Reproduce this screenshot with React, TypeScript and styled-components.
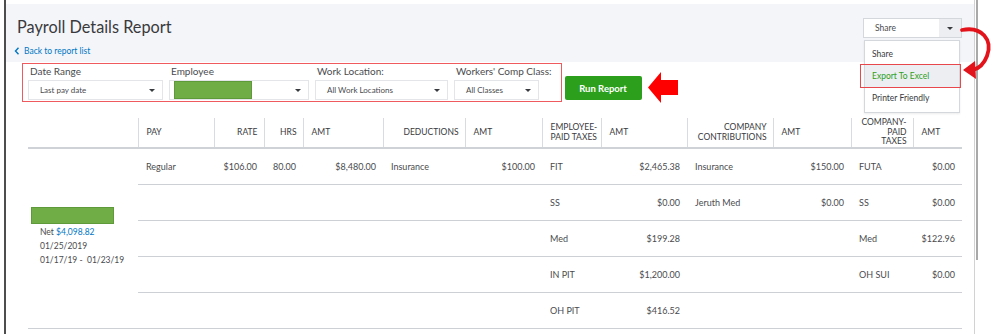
import React from 'react'
import styled, { createGlobalStyle } from 'styled-components'

const GlobalStyle = createGlobalStyle`
  html, body {
    margin: 0;
    padding: 0;
    background: #fff;
  }
  body {
    font-family: Lato, "Open Sans", "Liberation Sans", sans-serif;
    color: #4a4b4e;
  }
`

const Frame = styled.div`
  display: flex;
  height: 334px;
  padding-left: 4px;
  overflow: hidden;
`

const LeftRule = styled.div`
  width: 2px;
  background: #4d4d4d;
`

const Main = styled.div`
  width: 968px;
  display: flex;
  flex-direction: column;
`

const RightRail = styled.div`
  width: 3px;
  border-left: 1px solid #d2d2d2;
  display: flex;
  justify-content: flex-end;
`

const RailThumb = styled.div`
  width: 2px;
  height: 260px;
  background: #a9a9a9;
`

const Header = styled.div`
  margin-top: 4px;
  height: 58px;
  box-sizing: border-box;
  background: #f4f5f8;
  padding: 13px 12px 0 11px;
  display: flex;
  justify-content: space-between;
  align-items: flex-start;
  position: relative;
`

const TitleBlock = styled.div`
  display: flex;
  flex-direction: column;
`

const Title = styled.h1`
  margin: 0;
  font-size: 16.3px;
  line-height: 20px;
  font-weight: 400;
  color: #393a3d;
`

const BackLink = styled.a`
  margin-top: 8px;
  margin-left: -3px;
  display: flex;
  align-items: center;
  gap: 4px;
  font-size: 8.5px;
  line-height: 12px;
  color: #0077c5;
  text-decoration: none;
`

const ShareWrap = styled.div`
  position: relative;
  margin-top: 1px;
`

const ShareButton = styled.div`
  width: 99px;
  height: 20px;
  box-sizing: border-box;
  border: 1px solid #d4d7dc;
  background: #fff;
  display: flex;
  font-size: 8.5px;
`

const ShareLabel = styled.span`
  flex: 1;
  display: flex;
  align-items: center;
  padding-left: 11px;
`

const ShareCaret = styled.span`
  width: 22px;
  background: #eceef1;
  display: flex;
  align-items: center;
  justify-content: center;
`

const Caret = styled.span`
  width: 0;
  height: 0;
  border-left: 3px solid transparent;
  border-right: 3px solid transparent;
  border-top: 3.5px solid #393a3d;
`

const Menu = styled.ul`
  position: absolute;
  top: 22px;
  left: 1px;
  width: 96px;
  margin: 0;
  padding: 2px 0 3px;
  list-style: none;
  background: #fff;
  border: 1px solid #d4d7dc;
  box-shadow: 0 1px 2px rgba(0, 0, 0, 0.08);
  box-sizing: border-box;
  z-index: 2;
`

const MenuItem = styled.li<{ active?: boolean }>`
  position: relative;
  height: 22px;
  display: flex;
  align-items: center;
  padding-left: 7px;
  font-size: 8.5px;
  color: ${({ active }) => (active ? '#2ca01c' : '#393a3d')};
  background: ${({ active }) => (active ? '#eceef1' : 'transparent')};
`

const Callout = styled.span`
  position: absolute;
  top: -1px;
  bottom: -1px;
  left: -5px;
  right: -2px;
  border: 1px solid #e8474b;
`

const CurvedArrow = styled.svg`
  position: absolute;
  top: 6px;
  right: -34px;
  overflow: visible;
  z-index: 3;
`

const FilterRow = styled.div`
  display: flex;
  align-items: flex-start;
  padding: 1px 0 0 16px;
`

const FilterBox = styled.div`
  display: flex;
  gap: 6px;
  padding: 0 9px 1px 5px;
  border: 1px solid #ee5a5e;
`

const Field = styled.div`
  display: flex;
  flex-direction: column;
`

const FieldLabel = styled.label`
  padding-left: 2px;
  font-size: 10px;
  line-height: 14px;
  margin-bottom: 2px;
  white-space: nowrap;
`

const Select = styled.div<{ w: number }>`
  width: ${({ w }) => w}px;
  height: 20px;
  box-sizing: border-box;
  border: 1px solid #e3e5e8;
  background: #fff;
  display: flex;
  align-items: center;
  justify-content: space-between;
  padding: 0 7px 0 11px;
  font-size: 8px;
`

const Redacted = styled.span<{ w: number; h: number }>`
  display: block;
  width: ${({ w }) => w}px;
  height: ${({ h }) => h}px;
  background: #70ad47;
  border: 1px solid #5e9a3a;
  box-sizing: border-box;
`

const RunButton = styled.button`
  margin: 13px 0 0 3px;
  width: 77px;
  height: 24px;
  border: none;
  border-radius: 2px;
  background: #2ca01c;
  color: #fff;
  font-family: inherit;
  font-size: 9.5px;
  font-weight: 700;
`

const PointerArrow = styled.svg`
  margin: 9px 0 0 6px;
`

const Table = styled.table`
  margin: 15px 0 0 22px;
  width: 934px;
  border-collapse: collapse;
  table-layout: fixed;
`

const Th = styled.th<{ align: 'left' | 'right'; ruled: boolean }>`
  height: 30px;
  padding: 0 6px 0 8px;
  box-sizing: border-box;
  font-size: 8.5px;
  line-height: 9.5px;
  font-weight: 400;
  white-space: nowrap;
  text-align: ${({ align }) => align};
  vertical-align: middle;
  border-left: ${({ ruled }) => (ruled ? '1px solid #d8dbdf' : 'none')};
  border-bottom: 2px solid #cfd3d8;
  color: #393a3d;
`

const Td = styled.td<{ align: 'left' | 'right' }>`
  height: 35px;
  padding: 0 7px 0 8px;
  font-size: 9px;
  text-align: ${({ align }) => align};
  vertical-align: middle;
  border-bottom: 1px solid #cdd0d5;
  white-space: nowrap;
`

const EmployeeCell = styled.td`
  padding: 0 0 0 3px;
  vertical-align: middle;
  border-bottom: 1px solid #cdd0d5;
  font-size: 8.5px;
  line-height: 14px;
`

const EmployeeLines = styled.div`
  padding: 1px 0 3px 9px;
  white-space: nowrap;
`

const NetAmount = styled.span`
  color: #0077c5;
`

type Align = 'left' | 'right'

const columns: { key: string; head: React.ReactNode; width: number; headAlign: Align; align: Align }[] = [
  { key: 'pay', head: 'PAY', width: 76, headAlign: 'left', align: 'left' },
  { key: 'rate', head: 'RATE', width: 50, headAlign: 'right', align: 'right' },
  { key: 'hrs', head: 'HRS', width: 39, headAlign: 'right', align: 'right' },
  { key: 'amt', head: 'AMT', width: 80, headAlign: 'left', align: 'right' },
  { key: 'ded', head: 'DEDUCTIONS', width: 82, headAlign: 'right', align: 'left' },
  { key: 'dedAmt', head: 'AMT', width: 77, headAlign: 'left', align: 'right' },
  { key: 'eTax', head: <>EMPLOYEE-<br />PAID TAXES</>, width: 59, headAlign: 'left', align: 'left' },
  { key: 'eAmt', head: 'AMT', width: 86, headAlign: 'left', align: 'right' },
  { key: 'contrib', head: <>COMPANY<br />CONTRIBUTIONS</>, width: 86, headAlign: 'right', align: 'left' },
  { key: 'cAmt', head: 'AMT', width: 78, headAlign: 'left', align: 'right' },
  { key: 'cTax', head: <>COMPANY-<br />PAID<br />TAXES</>, width: 62, headAlign: 'right', align: 'left' },
  { key: 'ctAmt', head: 'AMT', width: 49, headAlign: 'left', align: 'right' },
]

const rows: Record<string, string>[] = [
  {
    pay: 'Regular',
    rate: '$106.00',
    hrs: '80.00',
    amt: '$8,480.00',
    ded: 'Insurance',
    dedAmt: '$100.00',
    eTax: 'FIT',
    eAmt: '$2,465.38',
    contrib: 'Insurance',
    cAmt: '$150.00',
    cTax: 'FUTA',
    ctAmt: '$0.00',
  },
  { eTax: 'SS', eAmt: '$0.00', contrib: 'Jeruth Med', cAmt: '$0.00', cTax: 'SS', ctAmt: '$0.00' },
  { eTax: 'Med', eAmt: '$199.28', cTax: 'Med', ctAmt: '$122.96' },
  { eTax: 'IN PIT', eAmt: '$1,200.00', cTax: 'OH SUI', ctAmt: '$0.00' },
  { eTax: 'OH PIT', eAmt: '$416.52' },
]

const filters = [
  { label: 'Date Range', value: 'Last pay date', width: 135 },
  { label: 'Employee', value: null, width: 140 },
  { label: 'Work Location:', value: 'All Work Locations', width: 133 },
  { label: "Workers' Comp Class:", value: 'All Classes', width: 85 },
]

function ShareMenu() {
  return (
    <ShareWrap>
      <ShareButton>
        <ShareLabel>Share</ShareLabel>
        <ShareCaret>
          <Caret />
        </ShareCaret>
      </ShareButton>
      <Menu>
        <MenuItem>Share</MenuItem>
        <MenuItem active>
          Export To Excel
          <Callout />
        </MenuItem>
        <MenuItem>Printer Friendly</MenuItem>
      </Menu>
      {/* red annotation arrow curling from the caret down to Export */}
      <CurvedArrow width="34" height="62" viewBox="0 0 34 62">
        <path d="M 0 6 C 20 2, 31 16, 25 32 C 22 40, 18 44, 11 46" fill="none" stroke="#e3131b" strokeWidth="3.8" strokeLinecap="round" />
        <polygon points="1,46 13,37 14,55" fill="#e3131b" />
      </CurvedArrow>
    </ShareWrap>
  )
}

export default function App() {
  return (
    <>
      <GlobalStyle />
      <Frame>
        <LeftRule />
        <Main>
          <Header>
            <TitleBlock>
              <Title>Payroll Details Report</Title>
              <BackLink href="#">
                <svg width="6" height="8" viewBox="0 0 6 8">
                  <path d="M4.5 0.8 L1.5 4 L4.5 7.2" fill="none" stroke="#0077c5" strokeWidth="1.4" />
                </svg>
                Back to report list
              </BackLink>
            </TitleBlock>
            <ShareMenu />
          </Header>

          <FilterRow>
            <FilterBox>
              {filters.map(f => (
                <Field key={f.label}>
                  <FieldLabel>{f.label}</FieldLabel>
                  <Select w={f.width}>
                    {f.value ? <span>{f.value}</span> : <Redacted w={78} h={18} style={{ marginLeft: -7 }} />}
                    <Caret />
                  </Select>
                </Field>
              ))}
            </FilterBox>
            <RunButton>Run Report</RunButton>
            <PointerArrow width="30" height="31" viewBox="0 0 30 31">
              <polygon points="0,15.5 13,0 13,8 30,8 30,23 13,23 13,31" fill="#ff0000" />
            </PointerArrow>
          </FilterRow>

          <Table>
            <colgroup>
              <col style={{ width: 110 }} />
              {columns.map(c => (
                <col key={c.key} style={{ width: c.width }} />
              ))}
            </colgroup>
            <thead>
              <tr>
                <Th align="left" ruled={false} />
                {columns.map(c => (
                  <Th key={c.key} align={c.headAlign} ruled>
                    {c.head}
                  </Th>
                ))}
              </tr>
            </thead>
            <tbody>
              {rows.map((row, i) => (
                <tr key={i}>
                  {i === 0 && (
                    <EmployeeCell rowSpan={rows.length}>
                      <Redacted w={83} h={17} />
                      <EmployeeLines>
                        <div>
                          Net <NetAmount>$4,098.82</NetAmount>
                        </div>
                        <div>01/25/2019</div>
                        <div>01/17/19 - &nbsp;01/23/19</div>
                      </EmployeeLines>
                    </EmployeeCell>
                  )}
                  {columns.map(c => (
                    <Td key={c.key} align={c.align}>
                      {row[c.key] ?? ''}
                    </Td>
                  ))}
                </tr>
              ))}
            </tbody>
          </Table>
        </Main>
        <RightRail>
          <RailThumb />
        </RightRail>
      </Frame>
    </>
  )
}
